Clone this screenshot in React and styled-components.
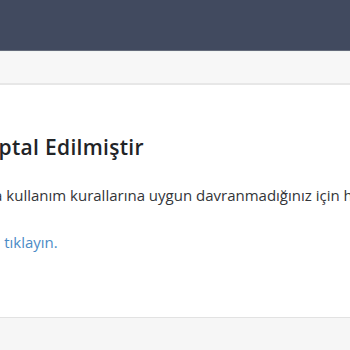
import React from "react";
import styled, { createGlobalStyle } from "styled-components";

const Global = createGlobalStyle`
  html, body { margin: 0; padding: 0; background: #ffffff; overflow: hidden; }
  body { font-family: "Open Sans", "Noto Sans", sans-serif; }
`;

const Page = styled.div`
  width: 350px;
  height: 350px;
  display: flex;
  flex-direction: column;
  overflow: hidden;
`;

const TopBar = styled.header`
  height: 50px;
  flex: none;
  background: #414a5f;
  border-bottom: 1px solid #656b7b;
`;

const SubBar = styled.nav`
  height: 31px;
  flex: none;
  background: #f7f7f7;
  border-top: 1px solid #f1f5f3;
  border-bottom: 2px solid #e7e7e7;
`;

const Main = styled.main`
  flex: none;
  height: 232px;
  background: #ffffff;
  overflow: hidden;
`;

const Content = styled.div`
  width: 900px;
  margin-left: -115px;
  padding-top: 48px;
  display: flex;
  flex-direction: column;
`;

const Title = styled.h1`
  margin: 0;
  font-size: 21px;
  line-height: 28px;
  font-weight: 600;
  letter-spacing: 0.3px;
  color: #222427;
  white-space: nowrap;
`;

const Text = styled.p`
  margin: ${(p) => p.$top}px 0 0;
  font-size: 15px;
  line-height: 22px;
  color: #333539;
  white-space: nowrap;
`;

const Link = styled.a`
  color: #4b8bc6;
  text-decoration: none;
`;

const Footer = styled.footer`
  flex: 1;
  background: #f6f6f6;
  border-top: 1px solid #e2e2e2;
`;

export default function App() {
  return (
    <>
      <Global />
      <Page>
        <TopBar />
        <SubBar />
        <Main>
          <Content>
            <Title>Hesabınız İptal Edilmiştir</Title>
            <Text $top={23}>Platformumuzda kullanım kurallarına uygun davranmadığınız için hesabınız kapatılmıştır.</Text>
            <Text $top={25}>İtiraz için <Link href="#">buraya tıklayın.</Link></Text>
          </Content>
        </Main>
        <Footer />
      </Page>
    </>
  );
}
